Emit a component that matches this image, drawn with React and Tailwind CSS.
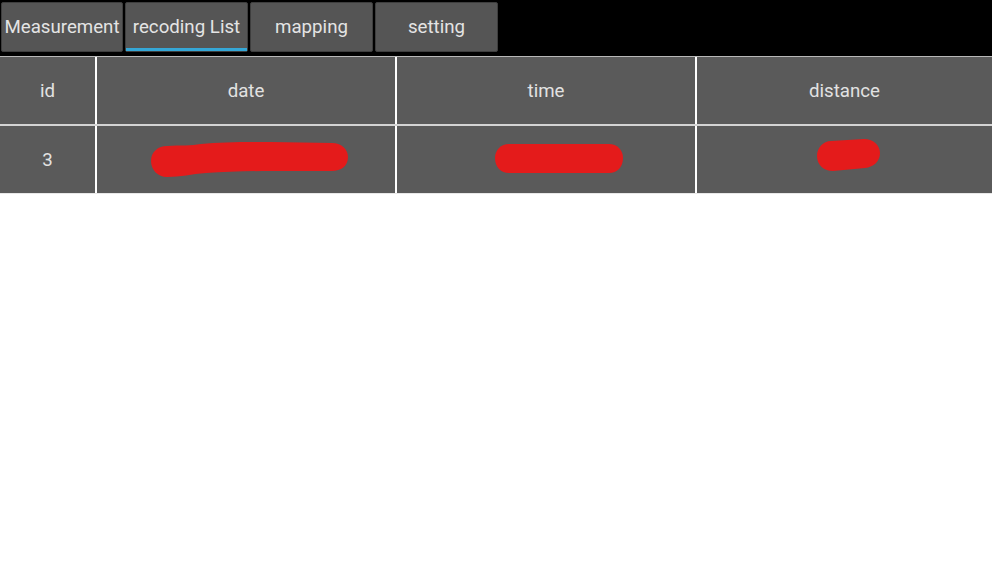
import React from "react";

const tabs = ["Measurement", "recoding List", "mapping", "setting"];

function Blob({ d, w, h }) {
  return (
    <svg width={w} height={h} viewBox={`0 0 ${w} ${h}`} className="block">
      <path d={d} fill="#e41b1b" />
    </svg>
  );
}

export default function App() {
  return (
    <div className="w-[992px] h-[566px] bg-white overflow-hidden" style={{ fontFamily: "Roboto, 'Noto Sans', sans-serif" }}>
      <div className="h-[56px] bg-black flex gap-[2px] pt-[2px] pl-[1px]">
        {tabs.map((t, i) => (
          <div
            key={t}
            className={`relative ${i === 0 ? "w-[122px]" : "w-[123px]"} h-[50px] bg-[#555555] border border-[#3e3e3e] rounded-[2px] flex items-center justify-center text-[18.7px] text-[#e4e4e4]`}
          >
            <span className="whitespace-nowrap">{t}</span>
            {i === 1 && <div className="absolute left-0 right-0 bottom-0 h-[3px] bg-[#35a7d6]" />}
          </div>
        ))}
      </div>
      <div className="h-[1px] bg-[#b8b8b8]" />
      <div className="grid grid-cols-[95px_298px_298px_1fr] gap-x-[2px] bg-white">
        {["id", "date", "time", "distance"].map((h) => (
          <div key={h} className="h-[67px] bg-[#5a5a5a] flex items-center justify-center text-[18.7px] text-[#e2e2e2] pt-[2px]">
            {h}
          </div>
        ))}
      </div>
      <div className="h-[2px] bg-[#d4d4d4]" />
      <div className="grid grid-cols-[95px_298px_298px_1fr] gap-x-[2px] bg-white">
        <div className="h-[67px] bg-[#5a5a5a] flex items-center justify-center text-[18.7px] text-[#e2e2e2] pt-[2px]">3</div>
        <div className="h-[67px] bg-[#5a5a5a] flex items-center justify-center">
          <div className="mt-[1px] ml-[7px]">
            <Blob
              w={197}
              h={36}
              d="M16 4 C30 3 40 4 50 2 C70 0 90 0 120 0 L181 1 C190 1 197 7 197 15 C197 24 190 29 181 29 L120 29 C95 29 75 30 55 31 C40 32 30 35 16 35 C7 35 0 28 0 19 C0 10 7 4 16 4 Z"
            />
          </div>
        </div>
        <div className="h-[67px] bg-[#5a5a5a] flex items-center justify-center">
          <div className="-mt-[3px] ml-[26px]">
            <Blob
              w={128}
              h={29}
              d="M14 0 L114 0 C122 0 128 6 128 14 C128 23 122 29 114 29 L14 29 C6 29 0 23 0 14 C0 6 6 0 14 0 Z"
            />
          </div>
        </div>
        <div className="h-[67px] bg-[#5a5a5a] flex items-center justify-center">
          <div className="-mt-[9px] ml-[8px]">
            <Blob
              w={63}
              h={32}
              d="M14 2 L47 0 C56 0 63 6 63 14 C63 22 57 28 48 29 L16 32 C7 32 0 26 0 17 C0 9 6 2 14 2 Z"
            />
          </div>
        </div>
      </div>
      <div className="h-[1px] bg-[#e8e8e8]" />
    </div>
  );
}
